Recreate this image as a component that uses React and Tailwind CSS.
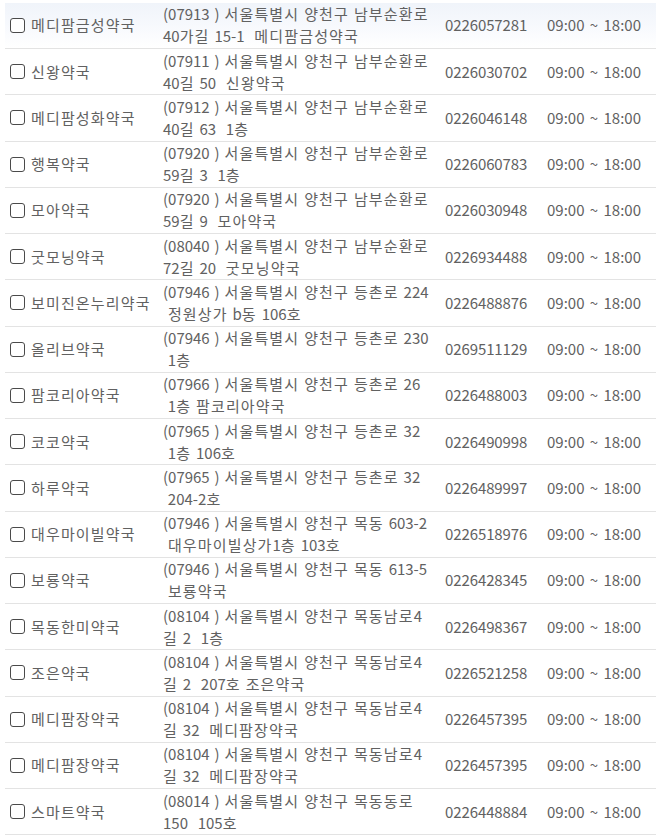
import React from "react";

const rows = [
  ["메디팜금성약국", "(07913 ) 서울특별시 양천구 남부순환로", "40가길 15-1  메디팜금성약국", "0226057281"],
  ["신왕약국", "(07911 ) 서울특별시 양천구 남부순환로", "40길 50  신왕약국", "0226030702"],
  ["메디팜성화약국", "(07912 ) 서울특별시 양천구 남부순환로", "40길 63  1층", "0226046148"],
  ["행복약국", "(07920 ) 서울특별시 양천구 남부순환로", "59길 3  1층", "0226060783"],
  ["모아약국", "(07920 ) 서울특별시 양천구 남부순환로", "59길 9  모아약국", "0226030948"],
  ["굿모닝약국", "(08040 ) 서울특별시 양천구 남부순환로", "72길 20  굿모닝약국", "0226934488"],
  ["보미진온누리약국", "(07946 ) 서울특별시 양천구 등촌로 224", " 정원상가 b동 106호", "0226488876"],
  ["올리브약국", "(07946 ) 서울특별시 양천구 등촌로 230", " 1층", "0269511129"],
  ["팜코리아약국", "(07966 ) 서울특별시 양천구 등촌로 26", " 1층 팜코리아약국", "0226488003"],
  ["코코약국", "(07965 ) 서울특별시 양천구 등촌로 32", " 1층 106호", "0226490998"],
  ["하루약국", "(07965 ) 서울특별시 양천구 등촌로 32", " 204-2호", "0226489997"],
  ["대우마이빌약국", "(07946 ) 서울특별시 양천구 목동 603-2", " 대우마이빌상가1층 103호", "0226518976"],
  ["보룡약국", "(07946 ) 서울특별시 양천구 목동 613-5", " 보룡약국", "0226428345"],
  ["목동한미약국", "(08104 ) 서울특별시 양천구 목동남로4", "길 2  1층", "0226498367"],
  ["조은약국", "(08104 ) 서울특별시 양천구 목동남로4", "길 2  207호 조은약국", "0226521258"],
  ["메디팜장약국", "(08104 ) 서울특별시 양천구 목동남로4", "길 32  메디팜장약국", "0226457395"],
  ["메디팜장약국", "(08104 ) 서울특별시 양천구 목동남로4", "길 32  메디팜장약국", "0226457395"],
  ["스마트약국", "(08014 ) 서울특별시 양천구 목동동로", "150  105호", "0226448884"],
];

function K({ text }) {
  const parts = text.split(/([\uAC00-\uD7A3]+)/);
  return (
    <>
      {parts.map((p, i) =>
        p === "" ? null : /[\uAC00-\uD7A3]/.test(p) ? (
          <span key={i} className="tracking-[1.15px]">{p}</span>
        ) : (
          <span key={i} className="[word-spacing:1.5px]">{p}</span>
        )
      )}
    </>
  );
}

export default function App() {
  return (
    <div
      className="w-[656px] h-[836px] overflow-hidden bg-white pt-[2.75px] text-[15px] text-[#616161]"
      style={{ fontFamily: '"Noto Sans CJK KR", "Noto Sans", sans-serif' }}
    >
      <div className="ml-[5px]">
        {rows.map((r, i) => (
          <div
            key={i}
            className={
              "grid grid-cols-[158px_282px_102px_1fr] items-center h-[46.25px] border-b border-[#e3e3e3] " +
              (i === 0 ? "bg-gradient-to-b from-[#f0f4fa] via-[#f7f9fd] to-white" : "")
            }
          >
            <div className="flex items-center pl-[5px]">
              <span className="w-[15px] h-[15px] border-[1.5px] border-[#4a4a4a] rounded-[3px] bg-white shrink-0" />
              <span className="ml-[6px] whitespace-nowrap leading-[22px]">
                <K text={r[0]} />
              </span>
            </div>
            <div className="leading-[22px] whitespace-pre">
              <div><K text={r[1]} /></div>
              <div><K text={r[2]} /></div>
            </div>
            <div className="whitespace-nowrap leading-[22px] tracking-[-0.1px]">{r[3]}</div>
            <div className="whitespace-nowrap leading-[22px] [word-spacing:2px]">09:00 ~ 18:00</div>
          </div>
        ))}
      </div>
    </div>
  );
}
